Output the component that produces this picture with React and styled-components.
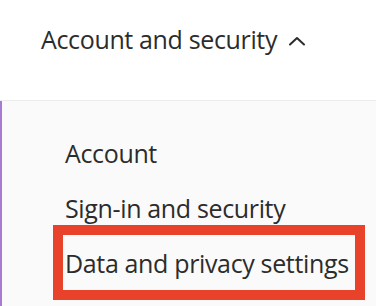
import React from "react";
import styled, { createGlobalStyle } from "styled-components";

const Global = createGlobalStyle`
  html, body { margin: 0; padding: 0; background: #ffffff; }
  body { font-family: "Open Sans", "Noto Sans", sans-serif; color: #2c2c2c; }
`;

const Page = styled.div`
  width: 376px;
  height: 306px;
  overflow: hidden;
  display: flex;
  flex-direction: column;
`;

const Header = styled.button`
  all: unset;
  box-sizing: border-box;
  height: 101px;
  padding: 22px 0 0 41px;
  display: flex;
  align-items: flex-start;
  gap: 11px;
  font-family: "Open Sans", "Noto Sans", sans-serif;
  font-size: 25px;
  letter-spacing: -0.35px;
  line-height: 34px;
  color: #2c2c2c;
  border-bottom: 1px solid #ececec;
`;

const Chevron = styled.svg`
  width: 18px;
  height: 10px;
  margin-top: 14px;
  flex: none;
`;

const Panel = styled.div`
  flex: 1;
  background: #fafafa;
  border-left: 2px solid #a77bd2;
  padding: 35px 0 0 63px;
  display: flex;
  flex-direction: column;
  gap: 21px;
`;

const Item = styled.a`
  position: relative;
  display: block;
  font-size: 25px;
  letter-spacing: -0.35px;
  line-height: 34px;
  color: #2c2c2c;
  text-decoration: none;
  white-space: nowrap;

  ${(p) =>
    p.$highlighted &&
    `
    &::after {
      content: "";
      position: absolute;
      left: -12px;
      top: -21px;
      width: 312px;
      height: 75px;
      box-sizing: border-box;
      border: 10px solid #e8422a;
    }
  `}
`;

export default function App() {
  return (
    <Page>
      <Global />
      <Header>
        Account and security
        <Chevron viewBox="0 0 18 10" aria-hidden="true">
          <path d="M2 8.5 L9 2 L16 8.5" fill="none" stroke="#2c2c2c" strokeWidth="2" strokeLinecap="round" strokeLinejoin="round" />
        </Chevron>
      </Header>
      <Panel>
        <Item href="#">Account</Item>
        <Item href="#">Sign-in and security</Item>
        <Item href="#" $highlighted>Data and privacy settings</Item>
      </Panel>
    </Page>
  );
}
